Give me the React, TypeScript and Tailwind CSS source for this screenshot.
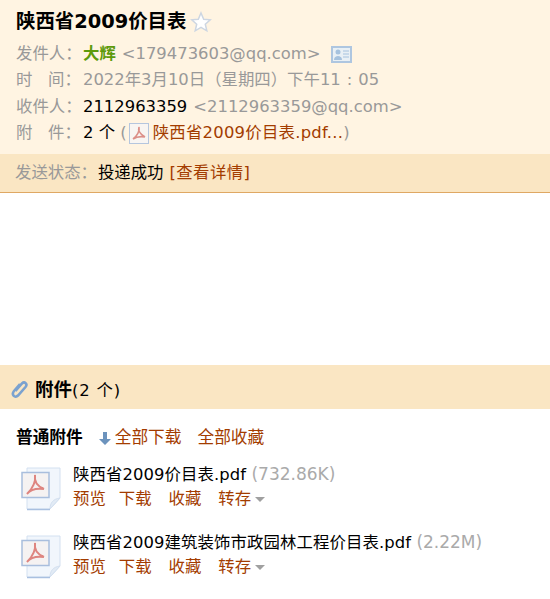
import React from "react";

const PdfMini = () => (
  <svg width="20" height="21" viewBox="0 0 20 21" className="shrink-0">
    <rect x="0.5" y="0.5" width="19" height="20" fill="#f8f5f2" stroke="#b5c6de" />
    <path d="M10 4c-1 3 1 7 6 10M10 4c1 4-2 9-6 12M4 16c3-2 7-3 12-2" fill="none" stroke="#dc8f88" strokeWidth="1.6" />
  </svg>
);

const PdfBig = () => (
  <svg width="40" height="44" viewBox="0 0 40 44" className="mt-[5px] shrink-0">
    <path d="M6 1h33v30l-10 11H6z" fill="#f1f6fc" stroke="#d3e0f0" />
    <path d="M29 42c0-6 3-10 10-11z" fill="#e2ebf5" stroke="#d3e0f0" />
    <path d="M6 42.5h23" stroke="#a9c0e0" strokeWidth="1.5" />
    <rect x="1" y="5.5" width="27" height="25" fill="#f5f2f2" stroke="#a9bedd" strokeWidth="1.5" />
    <path d="M14 8c-1 6 2 11 9 14M14 8c1 7-3 14-8 19M6 27c3-4 9-6 17-5" fill="none" stroke="#de8580" strokeWidth="2" />
  </svg>
);

const ContactCard = () => (
  <svg width="21" height="17" viewBox="0 0 21 17">
    <rect x="1" y="1" width="19" height="15" fill="#e9f0f5" stroke="#aec6e0" strokeWidth="2" />
    <circle cx="7" cy="6" r="2.5" fill="#a6c2de" />
    <path d="M3 14c0-3 2-4 4-4s4 1 4 4z" fill="#a6c2de" />
    <path d="M12 5h6M12 8h6M12 11h6" stroke="#a6c2de" />
  </svg>
);

const Star = () => (
  <svg width="22" height="22" viewBox="0 0 22 22">
    <path d="M11 2l2.7 6.2 6.6.6-5 4.4 1.5 6.6-5.8-3.5-5.8 3.5 1.5-6.6-5-4.4 6.6-.6z" fill="#fff" stroke="#cdd6e2" strokeWidth="1.5" />
  </svg>
);

const Clip = () => (
  <svg width="18" height="20" viewBox="0 0 18 20">
    <path d="M4.5 11l6.5-7.5c2.5-2.5 6 .5 3.5 3.5l-7.5 8.500c-3 3-7-.5-4-4.500l6-7" fill="none" stroke="#7ba2cf" strokeWidth="2.600" />
  </svg>
);

const Caret = () => <span className="ml-1 inline-block border-x-[5px] border-t-[5px] border-x-transparent border-t-[#a0a0a0]" />;

const HeadRow = ({ label, children }: { label: React.ReactNode; children: React.ReactNode }) => (
  <div className="flex h-[26.5px] items-center whitespace-pre">
    <span className="w-[67px] shrink-0 text-[#999]">{label}</span>
    {children}
  </div>
);

const attachments = [
  { name: "陕西省2009价目表.pdf", size: "(732.86K)" },
  { name: "陕西省2009建筑装饰市政园林工程价目表.pdf", size: "(2.22M)" },
];

export default function App() {
  return (
    <div className="w-[550px] h-[599px] overflow-hidden bg-white text-[16.4px] text-black font-['DejaVu_Sans','Noto_Sans_CJK_SC',sans-serif]">
      {/* Mail header */}
      <div className="h-[154px] bg-[#fff4e2] pl-4 pt-[8px]">
        <div className="flex h-[28px] items-center gap-1">
          <span className="text-[19.4px] font-bold">陕西省2009价目表</span>
          <Star />
        </div>
        <div className="pt-[5px]">
          <HeadRow label="发件人：">
            <span className="font-bold text-[#5d9a0b]">大辉</span>
            <span className="ml-[6px] text-[#999]">&lt;179473603@qq.com&gt;</span>
            <span className="ml-[10px] flex"><ContactCard /></span>
          </HeadRow>
          <HeadRow label="时   间：">
            <span className="text-[#999]">2022年3月10日（星期四）下午11<span className="mx-[6px]">:</span>05</span>
          </HeadRow>
          <HeadRow label="收件人：">
            <span>2112963359</span>
            <span className="ml-[6px] text-[#999]">&lt;2112963359@qq.com&gt;</span>
          </HeadRow>
          <HeadRow label="附   件：">
            <span>2 个 </span>
            <span className="text-[#999]">(</span>
            <span className="ml-[2px] mr-[4px] flex"><PdfMini /></span>
            <span className="tracking-[0.25px] text-[#a33c00]">陕西省2009价目表.pdf...</span>
            <span className="text-[#999]">)</span>
          </HeadRow>
        </div>
      </div>

      {/* Send status */}
      <div className="flex h-[39px] items-center border-b border-[#dfa863] bg-[#fae6c3] pl-[15px] whitespace-pre">
        <span className="text-[#999]">发送状态：</span>
        <span className="ml-[1px]">投递成功</span>
        <span className="ml-[6px] tracking-[0.4px] text-[#a33c00]">[查看详情]</span>
      </div>

      <div className="h-[172px]" />

      {/* Attachments */}
      <div className="flex h-[44px] items-center gap-[6px] bg-[#fae6c3] pl-[11px] pt-[5px]">
        <Clip />
        <span><b className="text-[18.5px]">附件</b><span className="tracking-[0.8px]">(2 个)</span></span>
      </div>

      <div className="flex h-[41px] items-end pl-4 text-[16.7px]">
        <span className="font-bold">普通附件</span>
        <svg width="14" height="16" viewBox="0 0 14 16" className="mb-[4px] ml-[15px]">
          <path d="M5 2h4v7h4l-6 6-6-6h4z" fill="#6c93bd" />
        </svg>
        <span className="ml-[3px] text-[#a33c00]">全部下载</span>
        <span className="ml-[16px] text-[#a33c00]">全部收藏</span>
      </div>

      <div className="flex flex-col gap-[18px] pt-[12px]">
        {attachments.map((a) => (
          <div key={a.name} className="flex items-start pl-[21px]">
            <PdfBig />
            <div className="ml-[12px] flex flex-col whitespace-nowrap">
              <div className="h-[25px] leading-[25px]">
                <span className="tracking-[0.1px]">{a.name}</span> <span className="text-[17px] text-[#aaa]">{a.size}</span>
              </div>
              <div className="flex h-[25px] items-center text-[#a33c00]">
                <span>预览</span>
                <span className="ml-[13px]">下载</span>
                <span className="ml-[17px]">收藏</span>
                <span className="ml-[17px] flex items-center">转存<Caret /></span>
              </div>
            </div>
          </div>
        ))}
      </div>
    </div>
  );
}
